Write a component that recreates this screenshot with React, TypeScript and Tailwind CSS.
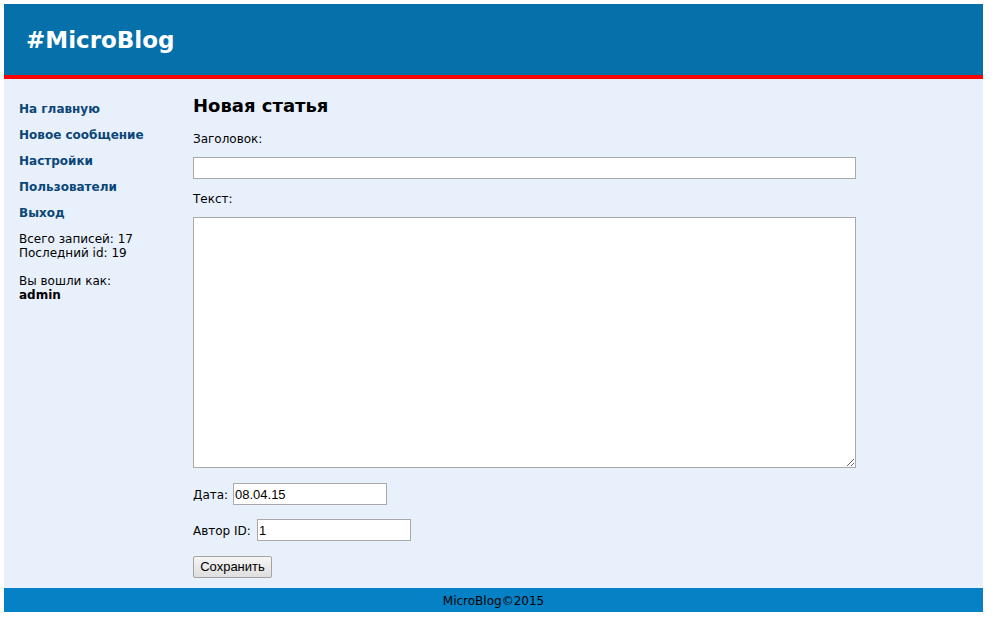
import React from "react";

const font = { fontFamily: '"DejaVu Sans", Verdana, sans-serif' };
const arial = { fontFamily: '"Liberation Sans", Arial, sans-serif' };

export default function App() {
  return (
    <div className="min-h-[619px] bg-white pt-[4px]" style={font}>
      <div className="ml-[4px] w-[979px]">
        <header className="h-[71px] bg-[#0670aa] border-b-[4px] border-[#ff0000] box-content flex items-center pl-[22px]">
          <h1 className="text-[23px] font-bold text-white leading-none mt-[1px]">#MicroBlog</h1>
        </header>
        <div className="flex bg-[#e8f0fc] h-[509px]">
          <aside className="w-[189px] pl-[15px] pt-[22px] text-[12px] text-black">
            <nav className="flex flex-col">
              {["На главную", "Новое сообщение", "Настройки", "Пользователи", "Выход"].map((t) => (
                <a key={t} href="#" className="font-bold text-[#0b4677] leading-[16px] mb-[10px]">
                  {t}
                </a>
              ))}
            </nav>
            <div className="leading-[14px] mt-[1px]">
              <div>Всего записей: 17</div>
              <div>Последний id: 19</div>
            </div>
            <div className="leading-[14px] mt-[14px]">
              <div>Вы вошли как:</div>
              <div className="font-bold">admin</div>
            </div>
          </aside>
          <main className="pt-[16px] text-[12px] text-black">
            <h2 className="text-[18px] font-bold leading-[22px]">Новая статья</h2>
            <div className="mt-[14px] leading-[16px]">Заголовок:</div>
            <input
              type="text"
              className="mt-[10px] block w-[663px] h-[22px] bg-white border border-[#a9a9a9] px-[2px] outline-none"
            />
            <div className="mt-[12px] leading-[16px]">Текст:</div>
            <textarea className="mt-[10px] block w-[663px] h-[251px] bg-white border border-[#a9a9a9] outline-none resize" />
            <div className="mt-[15px] flex items-center h-[22px]">
              <span className="w-[40px] pt-[1px]">Дата:</span>
              <input
                type="text"
                defaultValue="08.04.15"
                className="w-[154px] h-[22px] bg-white border border-[#a9a9a9] px-[1px] text-[13px] outline-none"
                style={arial}
              />
            </div>
            <div className="mt-[14px] flex items-center h-[22px]">
              <span className="w-[64px] pt-[1px]">Автор ID:</span>
              <input
                type="text"
                defaultValue="1"
                className="w-[154px] h-[22px] bg-white border border-[#a9a9a9] px-[1px] text-[13px] outline-none"
                style={arial}
              />
            </div>
            <button
              className="mt-[15px] w-[79px] h-[22px] rounded-[2px] border border-[#a3a3a3] bg-gradient-to-b from-[#f6f6f6] to-[#dedede] text-[13px] text-black"
              style={arial}
            >
              Сохранить
            </button>
          </main>
        </div>
        <footer className="h-[24px] bg-[#0582c6] flex items-center justify-center text-[12px] text-black pt-[1px]">
          MicroBlog©2015
        </footer>
      </div>
    </div>
  );
}
